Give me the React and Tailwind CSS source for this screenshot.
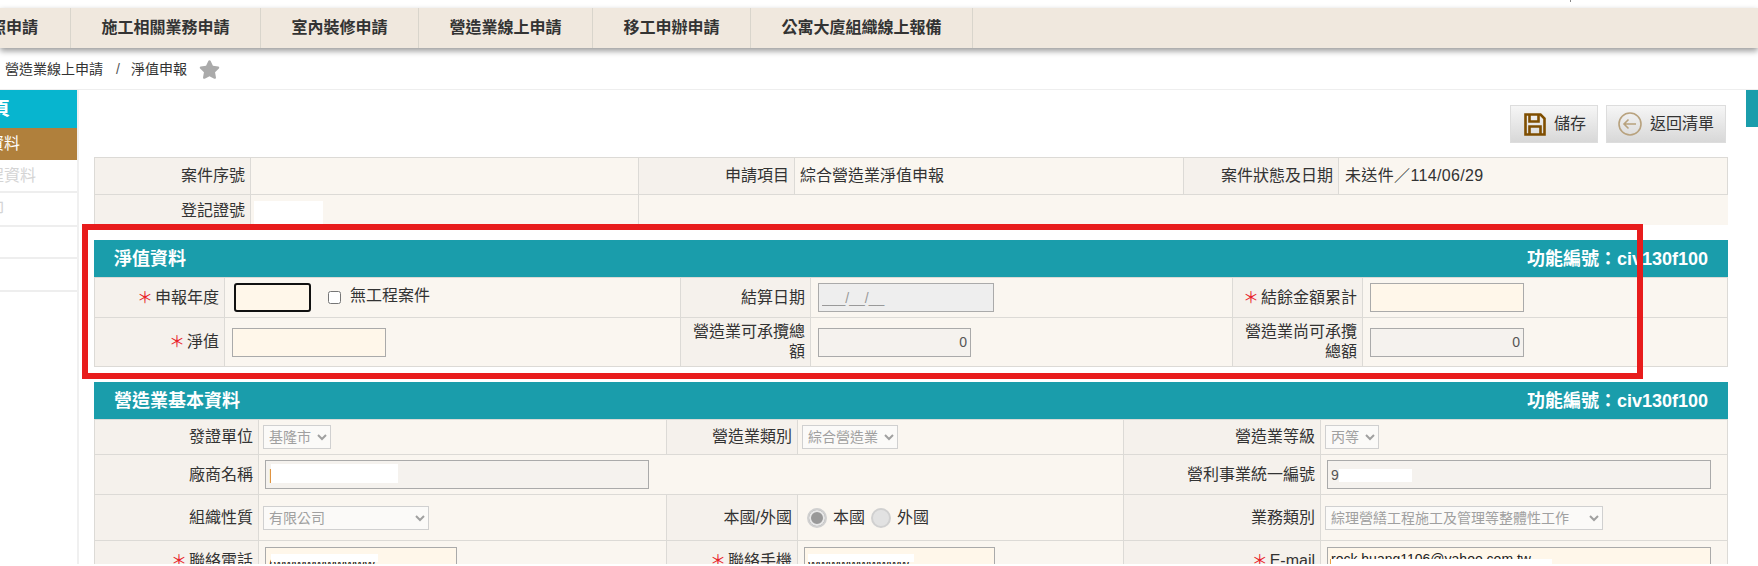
import React from "react";
import { FaStar } from "react-icons/fa";

const tabs = [
  { name: "照申請", w: "w-[71px] justify-end pr-[32px]" },
  { name: "施工相關業務申請", w: "w-[190px] justify-center" },
  { name: "室內裝修申請", w: "w-[158px] justify-center" },
  { name: "營造業線上申請", w: "w-[174px] justify-center" },
  { name: "移工申辦申請", w: "w-[158px] justify-center" },
  { name: "公寓大廈組織線上報備", w: "w-[222px] justify-center" },
];

const labelCls = "bg-[#f5f1ec] border border-[#dcdad6] text-right align-middle px-[5px] leading-[20px] font-normal";
const valueCls = "bg-[#faf6f0] border border-[#dcdad6] align-middle text-left font-normal";

const Label = ({ children, required }) => (
  <th className={labelCls}>
    {required && <span className="text-[#e8222a] mr-[2px]">＊</span>}
    {children}
  </th>
);

const Field = ({ value = "", className = "", right }) => (
  <input
    readOnly
    value={value}
    className={`block h-[29px] border border-[#aaaaaa] px-[3px] text-[14px] text-[#555] ${right ? "text-right" : ""} ${className}`}
  />
);

const Pick = ({ children, className = "" }) => (
  <select disabled className={`block h-[24px] border-[1.5px] border-[#d0d0d0] bg-[#fbfaf8] pl-[1px] text-[14px] text-[#a0a0a0] opacity-100 ${className}`}>
    <option>{children}</option>
  </select>
);

const Radio = ({ checked, className = "" }) => (
  <input
    type="radio"
    disabled
    defaultChecked={checked}
    name="nat"
    className={`appearance-none w-[20px] h-[20px] rounded-full border-2 border-[#d0d0d0] bg-[#e2e2e2] checked:bg-[#999999] checked:shadow-[inset_0_0_0_2px_#e8e8e8] ${className}`}
  />
);

const Head = ({ title }) => (
  <div className="h-[37px] bg-[#1a9dab] flex items-center justify-between px-[20px] pt-[2px] text-white font-bold text-[18px]">
    <span>{title}</span>
    <span>功能編號：civ130f100</span>
  </div>
);

export default function App() {
  return (
    <div className="relative h-[564px] overflow-hidden bg-white text-[16px] text-[#333] font-['Liberation_Sans','Noto_Sans_CJK_TC',sans-serif]">
      <div className="absolute left-[1570px] top-0 w-px h-[2px] bg-[#888]"></div>

      {/* 上方選單 */}
      <div className="mt-[8px] h-[40px] bg-[#f0e8de] flex font-bold shadow-[0_3px_6px_rgba(0,0,0,0.4)] relative">
        {tabs.map((t) => (
          <div key={t.name} className={`${t.w} flex items-center border-r border-[#d9d5cc] whitespace-nowrap`}>
            {t.name}
          </div>
        ))}
      </div>

      {/* 麵包屑 */}
      <div className="h-[42px] border-b border-[#eeeeee] pt-[2px] flex items-center pl-[5px] text-[14px]">
        <span>營造業線上申請</span>
        <span className="ml-[13px] text-[#555]">/</span>
        <span className="ml-[11px]">淨值申報</span>
        <FaStar className="ml-[12px] text-[#aaaaaa] text-[21px]" />
      </div>

      <div className="flex">
        {/* 左側選單 */}
        <div className="w-[79px] h-[474px] border-r-2 border-[#f0f0f0] shrink-0 overflow-hidden whitespace-nowrap">
          <div className="h-[38px] bg-[#07b5cf] text-white font-bold text-[18px] flex items-center -ml-[8px]">頁</div>
          <div className="h-[32px] bg-[#b0803c] text-white flex items-center -ml-[12px]">資料</div>
          <div className="h-[33px] border-b-2 border-[#eeeeee] text-[#d4d4d4] flex items-center -ml-[12px]">程資料</div>
          <div className="h-[34px] border-b-2 border-[#eeeeee] text-[#d4d4d4] flex items-center -ml-[12px]">印</div>
          <div className="h-[32px] border-b-2 border-[#eeeeee]"></div>
          <div className="h-[33px] border-b-2 border-[#eeeeee]"></div>
        </div>

        <div className="w-[1634px] ml-[15px] pt-[15px]">
          {/* 按鈕 */}
          <div className="flex justify-end gap-[8px] pr-[2px] mb-[14px]">
            <button className="w-[88px] h-[38px] border border-[#dddddd] bg-gradient-to-b from-[#f6f6f6] to-[#d8d8d8] flex items-center pl-[13px]">
              <svg width="22" height="23" viewBox="0 0 22 23" fill="none" stroke="#7f4e00" strokeWidth="2.6">
                <path d="M1.5 1.5h15l4 4v16h-19z" />
                <path d="M5.5 1.5v7h9v-7" />
                <path d="M5.5 21.5v-8h11v8" />
              </svg>
              <span className="ml-[8px]">儲存</span>
            </button>
            <button className="w-[120px] h-[38px] border border-[#dddddd] bg-gradient-to-b from-[#f6f6f6] to-[#d8d8d8] flex items-center pl-[11px]">
              <svg width="24" height="24" viewBox="0 0 24 24" fill="none" stroke="#b8a27e" strokeWidth="1.6">
                <circle cx="12" cy="12" r="11" />
                <path d="M18 12H6M10.5 7.5 6 12l4.5 4.5" />
              </svg>
              <span className="ml-[8px]">返回清單</span>
            </button>
          </div>

          {/* 案件資料 */}
          <div className="h-[68px] mb-[15px] overflow-hidden">
            <table className="w-full table-fixed border-collapse">
              <colgroup>
                <col className="w-[156px]" />
                <col className="w-[388px]" />
                <col className="w-[156px]" />
                <col className="w-[389px]" />
                <col className="w-[155px]" />
                <col />
              </colgroup>
              <tbody>
                <tr className="h-[37px]">
                  <Label>案件序號</Label>
                  <td className={valueCls}></td>
                  <Label>申請項目</Label>
                  <td className={`${valueCls} pl-[5px]`}>綜合營造業淨值申報</td>
                  <Label>案件狀態及日期</Label>
                  <td className={`${valueCls} pl-[6px] tracking-[0.35px]`}>未送件／114/06/29</td>
                </tr>
                <tr className="h-[32px]">
                  <Label>登記證號</Label>
                  <td className={`${valueCls} relative`}>
                    <div className="absolute left-[3px] top-[6px] w-[69px] h-[26px] bg-white"></div>
                  </td>
                  <td className="bg-[#faf6f0]" colSpan={4}></td>
                </tr>
              </tbody>
            </table>
          </div>

          {/* 淨值資料 */}
          <Head title="淨值資料" />
          <table className="w-full table-fixed border-collapse mb-[15px]">
            <colgroup>
              <col className="w-[130px]" />
              <col className="w-[456px]" />
              <col className="w-[130px]" />
              <col className="w-[422px]" />
              <col className="w-[130px]" />
              <col />
            </colgroup>
            <tbody>
              <tr className="h-[40px]">
                <Label required>申報年度</Label>
                <td className={valueCls}>
                  <div className="flex items-center pl-[9px]">
                    <div className="w-[77px] h-[29px] bg-[#fff7ea] border-[2px] border-[#111] rounded-[3px]"></div>
                    <input type="checkbox" className="ml-[17px] w-[13px] h-[13px]" />
                    <span className="ml-[9px] -mt-[4px]">無工程案件</span>
                  </div>
                </td>
                <Label>結算日期</Label>
                <td className={`${valueCls} pl-[7px]`}>
                  <Field value="___/__/__" className="w-[176px] bg-[#eeeeee] text-[#999]" />
                </td>
                <Label required>結餘金額累計</Label>
                <td className={`${valueCls} pl-[7px]`}>
                  <Field className="w-[154px] bg-[#fff7ea]" />
                </td>
              </tr>
              <tr className="h-[49px]">
                <Label required>淨值</Label>
                <td className={`${valueCls} pl-[7px]`}>
                  <Field className="w-[154px] bg-[#fff7ea]" />
                </td>
                <Label>營造業可承攬總額</Label>
                <td className={`${valueCls} pl-[7px]`}>
                  <Field value="0" right className="w-[153px] bg-[#f5f2ee]" />
                </td>
                <Label>營造業尚可承攬總額</Label>
                <td className={`${valueCls} pl-[7px]`}>
                  <Field value="0" right className="w-[154px] bg-[#f5f2ee]" />
                </td>
              </tr>
            </tbody>
          </table>

          {/* 營造業基本資料 */}
          <Head title="營造業基本資料" />
          <table className="w-full table-fixed border-collapse">
            <colgroup>
              <col className="w-[164px]" />
              <col className="w-[408px]" />
              <col className="w-[131px]" />
              <col className="w-[326px]" />
              <col className="w-[197px]" />
              <col />
            </colgroup>
            <tbody>
              <tr className="h-[35px]">
                <Label>發證單位</Label>
                <td className={`${valueCls} pl-[4px]`}><Pick className="w-[68px]">基隆市</Pick></td>
                <Label>營造業類別</Label>
                <td className={`${valueCls} pl-[4px]`}><Pick className="w-[96px]">綜合營造業</Pick></td>
                <Label>營造業等級</Label>
                <td className={`${valueCls} pl-[4px]`}><Pick className="w-[54px]">丙等</Pick></td>
              </tr>
              <tr className="h-[40px]">
                <Label>廠商名稱</Label>
                <td className={`${valueCls} pl-[6px]`} colSpan={3}>
                  <div className="relative w-[384px]">
                    <Field value="|" className="w-full bg-[#f5f2ee] !text-[#c97a2a]" />
                    <div className="absolute left-[6px] top-[4px] w-[127px] h-[19px] bg-white"></div>
                  </div>
                </td>
                <Label>營利事業統一編號</Label>
                <td className={`${valueCls} pl-[6px]`}>
                  <div className="relative w-[384px]">
                    <Field value="9" className="w-full bg-[#f5f2ee]" />
                    <div className="absolute left-[12px] top-[9px] w-[73px] h-[13px] bg-white"></div>
                  </div>
                </td>
              </tr>
              <tr className="h-[46px]">
                <Label>組織性質</Label>
                <td className={`${valueCls} pl-[4px]`}><Pick className="w-[166px]">有限公司</Pick></td>
                <Label>本國/外國</Label>
                <td className={`${valueCls} pl-[9px]`}>
                  <div className="flex items-center">
                    <Radio checked />
                    <span className="ml-[6px]">本國</span>
                    <Radio className="ml-[6px]" />
                    <span className="ml-[6px]">外國</span>
                  </div>
                </td>
                <Label>業務類別</Label>
                <td className={`${valueCls} pl-[4px]`}><Pick className="w-[278px]">綜理營繕工程施工及管理等整體性工作</Pick></td>
              </tr>
              <tr className="h-[40px]">
                <Label required>聯絡電話</Label>
                <td className={`${valueCls} pl-[6px] align-top pt-[6px]`}>
                  <div className="relative w-[192px]">
                    <Field value="(wwwwwwwwww" className="w-full bg-[#fff7ea] pt-[4px] !text-[14px] !text-[#222]" />
                    <div className="absolute left-[6px] top-[7px] w-[107px] h-[8px] bg-white"></div>
                  </div>
                </td>
                <Label required>聯絡手機</Label>
                <td className={`${valueCls} pl-[6px] align-top pt-[6px]`}>
                  <div className="relative w-[191px]">
                    <Field value="wwwwwwwwww" className="w-full bg-[#fff7ea] pt-[4px] !text-[14px] !text-[#222]" />
                    <div className="absolute left-[4px] top-[7px] w-[106px] h-[8px] bg-white"></div>
                  </div>
                </td>
                <Label required>E-mail</Label>
                <td className={`${valueCls} pl-[6px] align-top pt-[6px]`}>
                  <div className="relative w-[384px]">
                    <Field value="rock.huang1106@yahoo.com.tw" className="w-full bg-[#fff7ea] pb-[5px] !text-[14px] !text-[#222]" />
                    <div className="absolute left-[3px] top-[12px] w-[222px] h-[16px] bg-white border-l border-[#e8a040]"></div>
                  </div>
                </td>
              </tr>
            </tbody>
          </table>
        </div>
      </div>

      <div className="absolute left-[1746px] top-[90px] w-[12px] h-[37px] bg-[#1a9dab]"></div>
      {/* 紅框標示 */}
      <div className="absolute left-[82px] top-[224px] w-[1561px] h-[155px] border-[6px] border-[#e81c1c]"></div>
    </div>
  );
}
